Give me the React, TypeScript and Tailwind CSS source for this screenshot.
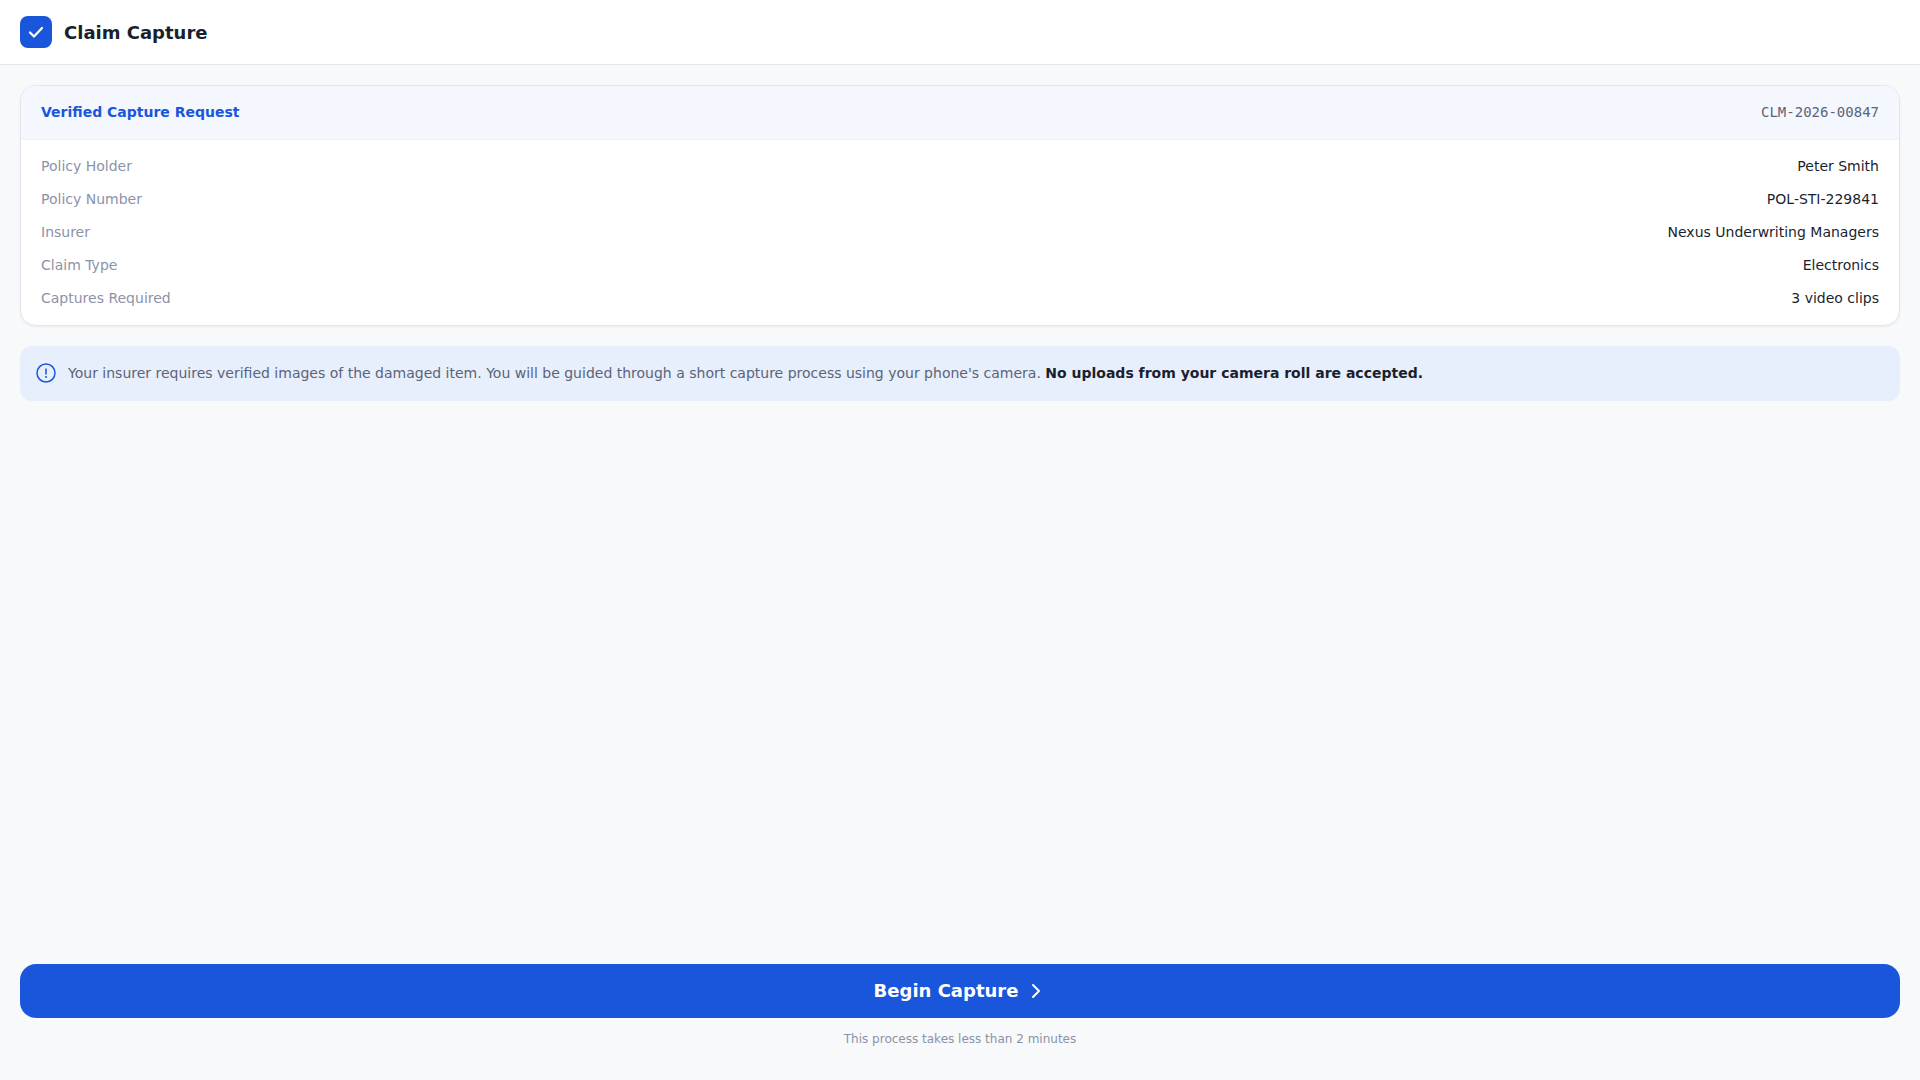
const details = [
  ["Policy Holder", "Peter Smith"],
  ["Policy Number", "POL-STI-229841"],
  ["Insurer", "Nexus Underwriting Managers"],
  ["Claim Type", "Electronics"],
  ["Captures Required", "3 video clips"],
];

export default function App() {
  return (
    <div className="flex min-h-screen flex-col bg-[#f8f9fb] font-['DejaVu_Sans',sans-serif] text-[#1a1f2e]">
      <header className="flex items-center gap-3 border-b border-[#e2e6ed] bg-white px-5 py-4">
        <div className="flex size-8 items-center justify-center rounded-lg bg-[#1a56db]">
          <svg className="size-[18px]" viewBox="0 0 18 18" fill="none" stroke="white" strokeWidth="2.25" strokeLinecap="round" strokeLinejoin="round" aria-hidden="true">
            <path d="M3 9.5 7 13.5l8-8.5" />
          </svg>
        </div>
        <h1 className="text-lg leading-[27px] font-bold">Claim Capture</h1>
      </header>
      <main className="flex flex-1 flex-col gap-5 p-5">
        <section className="overflow-hidden rounded-2xl border border-[#e2e6ed] bg-white shadow-[0_1px_3px_rgba(0,0,0,0.06)]">
          <div className="flex items-center justify-between border-b border-[#edf0f5] bg-[#f4f7fe] px-5 py-4 text-sm leading-[21px]">
            <h2 className="font-bold text-[#1a56db]">Verified Capture Request</h2>
            <span className="font-['DejaVu_Sans_Mono',monospace] text-[#5b6478]">CLM-2026-00847</span>
          </div>
          <dl className="px-5 py-2.5">
            {details.map(([label, value]) => (
              <div key={label} className="flex items-center justify-between py-1.5 text-sm leading-[21px]">
                <dt className="text-[#8b93a7]">{label}</dt>
                <dd>{value}</dd>
              </div>
            ))}
          </dl>
        </section>
        <aside className="flex items-start gap-3 rounded-xl bg-[#e7eefc] p-4">
          <svg className="mt-px size-5 shrink-0" viewBox="0 0 20 20" fill="none" stroke="#1a56db" strokeWidth="1.5" aria-hidden="true">
            <circle cx="10" cy="10" r="9" />
            <path d="M10 5.5v6M10 13v2" />
          </svg>
          <p className="text-sm leading-[23px] text-[#5b6478]">
            Your insurer requires verified images of the damaged item. You will be guided through a short capture process using your phone's camera.{" "}
            <strong className="font-bold text-[#1a1f2e]">No uploads from your camera roll are accepted.</strong>
          </p>
        </aside>
      </main>
      <footer className="px-5 pb-8 text-center">
        <button type="button" className="flex w-full items-center justify-center gap-2 rounded-2xl bg-[#1a56db] py-4 text-lg leading-[22px] font-bold text-white">
          Begin Capture
          <svg className="size-5" viewBox="0 0 20 20" fill="none" stroke="currentColor" strokeWidth="2" strokeLinecap="round" strokeLinejoin="round" aria-hidden="true">
            <path d="m7 4 6 6-6 6" />
          </svg>
        </button>
        <p className="mt-3 text-xs leading-[18px] text-[#8b93a7]">This process takes less than 2 minutes</p>
      </footer>
    </div>
  );
}
